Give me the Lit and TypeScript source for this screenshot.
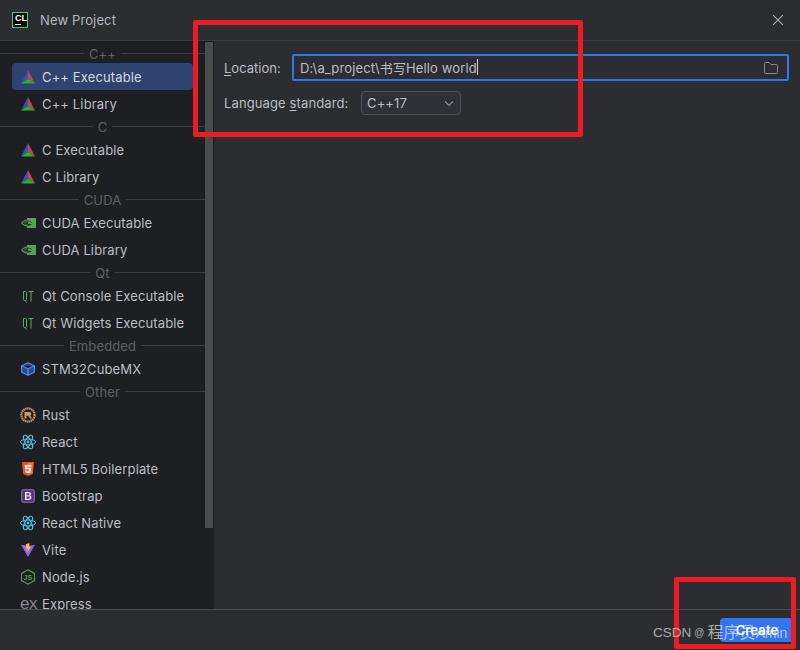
import { LitElement, html, css, svg } from "lit";
import { customElement } from "lit/decorators.js";

const cmake = svg`<svg class="ic" viewBox="0 0 14 14"><path d="M7 0 0 13.500 7 9z" fill="#3d4fb8"/><path d="M7 0 14 13.500 7 9z" fill="#c2494b"/><path d="M0 13.500 7 9 14 13.500z" fill="#22b82e"/></svg>`;
const nvidia = svg`<svg class="ic nv" viewBox="0 0 15 10"><path d="M6 0h9v10H6V8.600C3.500 8.400 1.500 7 0 5c1.500-2 3.500-3.400 6-3.600z" fill="#5a9e58"/><path d="M1.300 5C2.700 3.400 4.500 2.400 6.500 2.400c2.400 0 4 1 5 2.800-1.200-1-2.600-1.600-4-1.600L6.500 5.300c1 .8 2.600 1 4.300.6-1 1.200-2.600 1.900-4.300 1.700C4.500 7.400 2.700 6.500 1.300 5z" fill="#24302a"/><path d="M3.300 5c1-.9 2-1.400 3.200-1.500M4 6c.8.500 1.600.8 2.500.9" fill="none" stroke="#5a9e58" stroke-width=".6"/></svg>`;
const qt = svg`<svg class="ic" viewBox="0 0 14 14" fill="none" stroke="#59a869" stroke-width="1"><path d="M2.500 2.500h2a1 1 0 0 1 1 1v7a1 1 0 0 1-1 1h-1a1 1 0 0 1-1-1zM4.200 11.500l1.300 2M7.500 2.500h5M10 2.500v10"/></svg>`;
const cube = svg`<svg class="ic" viewBox="0 0 14 14" fill="#2d4a80" stroke="#548af7" stroke-width="1.200" stroke-linejoin="round"><path d="M7 .7 13.400 3.700v6.600L7 13.300.6 10.300V3.700zM.6 3.700 7 6.800l6.400-3.100M7 6.800v6.500"/></svg>`;
const rust = svg`<svg class="ic big" viewBox="0 0 16 16"><circle cx="8" cy="8" r="6.600" fill="none" stroke="#c49a65" stroke-width="2.200" stroke-dasharray="1.500 .5"/><path d="M4.500 5h5.200a1.800 1.800 0 0 1 .6 3.400L12 11.500H9.900L8.400 8.800H6.500V11.500h-2z" fill="#c49a65"/></svg>`;
const react = svg`<svg class="ic big" viewBox="0 0 16 16" fill="none" stroke="#53c1de" stroke-width="1"><ellipse cx="8" cy="8" rx="7.500" ry="3"/><ellipse cx="8" cy="8" rx="7.500" ry="3" transform="rotate(60 8 8)"/><ellipse cx="8" cy="8" rx="7.500" ry="3" transform="rotate(120 8 8)"/><circle cx="8" cy="8" r="1.400" fill="#53c1de" stroke="none"/></svg>`;
const html5 = svg`<svg class="ic" viewBox="0 0 14 14"><path d="M1 0h12l-1.100 12L7 14 2.100 12z" fill="#e4532b"/><path d="M7 1h5l-.9 10.200L7 12.800z" fill="#ef7a3c"/><path d="M10.200 3H3.800l.3 4.200h4l-.2 2L7 9.700l-1-.4-.1-1H4.400l.2 2.200L7 11.300l2.400-.8.400-4.700H5.500l-.1-1.300h4.700z" fill="#fff"/></svg>`;
const bootstrap = svg`<svg class="ic" viewBox="0 0 14 14"><rect x=".5" y=".5" width="13" height="13" rx="2" fill="#563d7c" stroke="#7d6a9d"/><path d="M4 3h3.700c1.500 0 2.300.8 2.300 1.900 0 .8-.4 1.400-1.100 1.700 1 .2 1.500 1 1.500 1.900 0 1.500-1 2.500-2.700 2.500H4zm1.500 1.300v2h1.900c.7 0 1.100-.4 1.100-1s-.4-1-1.100-1zm0 3.200v2.300h2.100c.9 0 1.300-.4 1.300-1.200 0-.7-.5-1.100-1.300-1.100z" fill="#e8e6ee"/></svg>`;
const vite = svg`<svg class="ic" viewBox="0 0 14 14"><path d="M0 1.800 7 3l7-1.200L7 14z" fill="#8a63f2"/><path d="M1.800 2.600 7 3.500 7 11.500z" fill="#a06bff"/><path d="M8.300 0 4.800 1.200 5.500 6.500l1.500-.4-.3 3L10 3.800 8.400 4.200z" fill="#ffc517"/></svg>`;
const node = svg`<svg class="ic big" viewBox="0 0 16 16" fill="none"><path d="M8 .8 14.500 4.400v7.200L8 15.200 1.500 11.600V4.400z" stroke="#5a9e58" stroke-width="1.100"/><text x="8" y="10.500" text-anchor="middle" font-size="7" font-family="'Liberation Sans',sans-serif" font-weight="700" fill="#5a9e58">JS</text></svg>`;

type Row = { h: string } | { t: string; i: unknown; sel?: boolean };
const rows: Row[] = [
  { h: "C++" },
  { t: "C++ Executable", i: cmake, sel: true },
  { t: "C++ Library", i: cmake },
  { h: "C" },
  { t: "C Executable", i: cmake },
  { t: "C Library", i: cmake },
  { h: "CUDA" },
  { t: "CUDA Executable", i: nvidia },
  { t: "CUDA Library", i: nvidia },
  { h: "Qt" },
  { t: "Qt Console Executable", i: qt },
  { t: "Qt Widgets Executable", i: qt },
  { h: "Embedded" },
  { t: "STM32CubeMX", i: cube },
  { h: "Other" },
  { t: "Rust", i: rust },
  { t: "React", i: react },
  { t: "HTML5 Boilerplate", i: html5 },
  { t: "Bootstrap", i: bootstrap },
  { t: "React Native", i: react },
  { t: "Vite", i: vite },
  { t: "Node.js", i: node },
  { t: "Express", i: html`<span class="ex">ex</span>` },
];

@customElement("app-root")
export class AppRoot extends LitElement {
  static styles = css`
    :host {
      display: block;
      width: 800px;
      height: 650px;
      position: relative;
      overflow: hidden;
      background: #2b2d30;
      color: #dfe1e5;
      font-family: Inter, "Noto Sans CJK SC", sans-serif;
      font-size: 13px;
      letter-spacing: 0.13px;
    }
    .dialog { display: flex; flex-direction: column; height: 650px; }
    .title {
      height: 40px;
      flex: none;
      display: flex;
      align-items: center;
      padding: 0 17px 0 12px;
      border-bottom: 1px solid #393b40;
      color: #b4b8bf;
    }
    .logo {
      width: 12px;
      height: 14px;
      padding-left: 2px;
      background: #000;
      border: 1px solid #21d789;
      margin-right: 12px;
      position: relative;
      color: #fff;
      font: 700 9px/11px "Liberation Sans", sans-serif;
      letter-spacing: 0;
    }
    .logo::after {
      content: "";
      position: absolute;
      left: 2px;
      bottom: 2px;
      width: 6px;
      height: 1px;
      background: #fff;
    }
    .close { margin-left: auto; width: 10px; height: 10px; display: block; }
    .body { flex: 1; display: flex; min-height: 0; }
    .side {
      width: 214px;
      flex: none;
      background: #1e1f22;
      display: flex;
      overflow: hidden;
    }
    .list { width: 205px; flex: none; padding-top: 3px; }
    .head {
      height: 19px;
      display: flex;
      align-items: center;
      gap: 5px;
      color: #5e6167;
    }
    .head::before, .head::after { content: ""; flex: 1; height: 1px; background: #393b40; }
    .item {
      height: 27px;
      margin: 0 12px;
      padding-left: 8px;
      display: flex;
      align-items: center;
      gap: 6px;
      border-radius: 4px;
      white-space: nowrap;
      color: #bcbec4;
    }
    .item.sel { background: #2e436e; color: #d5d8de; }
    .ic { width: 14px; height: 14px; flex: none; margin: 0 1px; }
    .ic.big { width: 16px; height: 16px; margin: 0; }
    .ic.nv { width: 15px; height: 10px; margin: 0 0 0 1px; }
    .ex {
      width: 16px;
      flex: none;
      font: 17px/16px "Liberation Sans", sans-serif;
      color: #868a91;
      letter-spacing: -0.5px;
    }
    .track { width: 9px; flex: none; padding-top: 1px; }
    .thumb { width: 8px; height: 486px; background: #4a4b4d; }
    .main { flex: 1; padding: 13px 11px 0 10px; display: flex; flex-direction: column; gap: 10px; }
    .row { display: flex; align-items: center; }
    .lab { color: #bcbec4; width: 68px; flex: none; letter-spacing: 0; }
    .lab.wide { width: 137px; letter-spacing: 0.12px; padding-bottom: 1px; }
    u { text-underline-offset: 2px; }
    .input {
      flex: 1;
      height: 27px;
      box-sizing: border-box;
      border: 2px solid #3574f0;
      border-radius: 2px;
      display: flex;
      align-items: center;
      padding: 0 8px 1px 6px;
      color: #bcbec4;
      white-space: nowrap;
    }
    .caret { width: 1px; height: 16px; background: #ced0d6; }
    .folder { margin-left: auto; width: 16px; height: 16px; margin-top: 1px; }
    .combo {
      width: 100px;
      height: 24px;
      box-sizing: border-box;
      border: 1px solid #4e5157;
      border-radius: 4px;
      background: #2f3136;
      display: flex;
      align-items: center;
      justify-content: space-between;
      padding: 0 5px 1px 5px;
      color: #bcbec4;
    }
    .chev { width: 12px; height: 12px; margin-top: 1px; }
    .foot {
      height: 32px;
      flex: none;
      border-top: 1px solid #4a4c50;
      display: flex;
      justify-content: flex-end;
      padding: 8px 6px 0 0;
    }
    .btn {
      width: 74px;
      height: 24px;
      background: #3574f0;
      border-radius: 4px;
      color: #fff;
      font-weight: 600;
      text-align: center;
      line-height: 24px;
    }
    .mark {
      position: absolute;
      border: 5px solid #ed1c24;
      box-sizing: border-box;
      border-radius: 2px;
    }
    .m1 { left: 193px; top: 20px; width: 390px; height: 117px; }
    .m2 { left: 674px; top: 577px; width: 122px; height: 72px; }
    .wm {
      position: absolute;
      left: 653px;
      top: 623px;
      font-size: 14px;
      line-height: 20px;
      letter-spacing: 0;
      color: rgba(255, 255, 255, 0.6);
      white-space: nowrap;
      font-family: "Liberation Sans", "Noto Sans CJK SC", sans-serif;
      display: flex;
      align-items: center;
    }
    .wm .csdn { font-size: 13.5px; }
    .wm .at { font-size: 10px; margin: 0 3px; }
    .wm .zh { font-size: 16px; }
  `;

  render() {
    return html`
      <div class="dialog">
        <div class="title">
          <div class="logo">CL</div>
          <span>New Project</span>
          <svg class="close" viewBox="0 0 10 10" stroke="#a8abb0" stroke-width="1.100"><path d="M0 0l10 10M10 0 0 10" /></svg>
        </div>
        <div class="body">
          <div class="side">
            <div class="list">
              ${rows.map((r) =>
                "h" in r
                  ? html`<div class="head">${r.h}</div>`
                  : html`<div class="item ${r.sel ? "sel" : ""}">${r.i}<span>${r.t}</span></div>`
              )}
            </div>
            <div class="track"><div class="thumb"></div></div>
          </div>
          <div class="main">
            <div class="row">
              <span class="lab"><u>L</u>ocation:</span>
              <div class="input">
                <span>D:\\a_project\\书写Hello world</span><span class="caret"></span>
                <svg class="folder" viewBox="0 0 16 16" fill="none" stroke="#868a91"><path d="M1.500 12.500v-9a1 1 0 0 1 1-1h3.500l2 2h5.500a1 1 0 0 1 1 1v7a1 1 0 0 1-1 1h-11a1 1 0 0 1-1-1z"/></svg>
              </div>
            </div>
            <div class="row">
              <span class="lab wide">Language <u>s</u>tandard:</span>
              <div class="combo">
                <span>C++17</span>
                <svg class="chev" viewBox="0 0 12 12" fill="none" stroke="#8a8d93" stroke-width="1.100"><path d="M2 4.500l4 4 4-4"/></svg>
              </div>
            </div>
          </div>
        </div>
        <div class="foot"><div class="btn">Create</div></div>
      </div>
      <div class="mark m1"></div>
      <div class="mark m2"></div>
      <div class="wm"><span class="csdn">CSDN</span><span class="at">@</span><span class="zh">程序员</span><span>Amin</span></div>
    `;
  }
}
